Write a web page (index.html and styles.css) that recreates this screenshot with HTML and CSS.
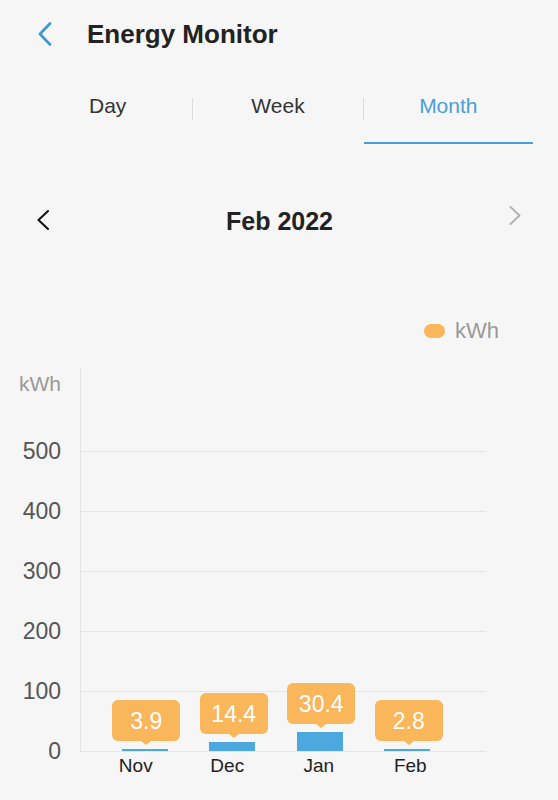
FILE: index.html
```html
<!DOCTYPE html>
<html lang="en">
<head>
  <meta charset="UTF-8" />
  <meta name="viewport" content="width=device-width, initial-scale=1" />
  <title>Energy Monitor</title>
  <link rel="stylesheet" href="styles.css">
</head>
<body>

  <header class="topbar">
    <a class="back" href="#" aria-label="Back">
      <svg width="14" height="24" viewBox="0 0 14 24"><polyline points="12,1.5 2,12 12,22.5" /></svg>
    </a>
    <h1>Energy Monitor</h1>
  </header>

  <nav class="tabs" aria-label="Period">
    <a class="tab" href="#">Day</a>
    <span class="tab-sep"></span>
    <a class="tab" href="#">Week</a>
    <span class="tab-sep"></span>
    <a class="tab active" href="#">Month</a>
  </nav>

  <section class="period">
    <button class="arrow prev" aria-label="Previous month">
      <svg width="14" height="20" viewBox="0 0 14 20"><polyline points="12,1 2.5,10 12,19" /></svg>
    </button>
    <h2>Feb 2022</h2>
    <button class="arrow next" aria-label="Next month">
      <svg width="12" height="19" viewBox="0 0 12 19"><polyline points="1.5,1 10.5,9.5 1.5,18" /></svg>
    </button>
  </section>

  <div class="legend">
    <span class="legend-dot"></span>
    <span class="legend-label">kWh</span>
  </div>

  <section class="chart" aria-label="Monthly energy use">
    <div class="y-axis">
      <span class="y-unit">kWh</span>
      <span class="y-tick">500</span>
      <span class="y-tick">400</span>
      <span class="y-tick">300</span>
      <span class="y-tick">200</span>
      <span class="y-tick">100</span>
      <span class="y-tick">0</span>
    </div>

    <div class="plot">
      <div class="col">
        <div class="tip">3.9</div>
        <div class="bar" style="height: 2px;"></div>
      </div>
      <div class="col">
        <div class="tip">14.4</div>
        <div class="bar" style="height: 9px;"></div>
      </div>
      <div class="col">
        <div class="tip">30.4</div>
        <div class="bar" style="height: 19px;"></div>
      </div>
      <div class="col">
        <div class="tip">2.8</div>
        <div class="bar" style="height: 2px;"></div>
      </div>
    </div>

    <div class="x-axis">
      <span>Nov</span>
      <span>Dec</span>
      <span>Jan</span>
      <span>Feb</span>
    </div>
  </section>

</body>
</html>
```

FILE: styles.css
```css
/* Base */
* {
  box-sizing: border-box;
}
body {
  margin: 0;
  font-family: 'Liberation Sans', Arial, sans-serif;
  background-color: #f6f6f6;
  color: #222;
  min-height: 100vh;
}

/* Top bar */
.topbar {
  height: 68px;
  display: flex;
  align-items: center;
  padding-left: 38px;
}
.back {
  display: flex;
  margin-right: 35px;
}
.back svg polyline {
  fill: none;
  stroke: #3d97d3;
  stroke-width: 2.6;
  stroke-linecap: round;
  stroke-linejoin: round;
}
.topbar h1 {
  margin: 0;
  font-size: 26px;
  font-weight: 700;
  color: #222;
}

/* Tabs */
.tabs {
  display: flex;
  margin: 0 25px 0 23px;
  height: 76px;
}
.tab {
  flex: 1;
  text-align: center;
  text-decoration: none;
  font-size: 21px;
  line-height: 76px;
  color: #333;
  border-bottom: 2px solid transparent;
}
.tab.active {
  color: #4a9ed6;
  border-bottom-color: #4a9ed6;
}
.tab-sep {
  width: 1px;
  height: 22px;
  margin-top: 30px;
  background-color: #dcdcdc;
}

/* Month switcher */
.period {
  display: flex;
  align-items: center;
  justify-content: space-between;
  height: 50px;
  margin-top: 51px;
  padding: 0 37px 0 36px;
}
.period h2 {
  margin: 0;
  font-size: 25px;
  font-weight: 700;
  color: #222;
  padding-top: 3px;
}
.arrow {
  background: none;
  border: none;
  padding: 0;
  display: flex;
}
.arrow polyline {
  fill: none;
  stroke-width: 2;
  stroke-linecap: round;
  stroke-linejoin: round;
}
.prev polyline { stroke: #111; }
.next { margin-top: -9px; }
.next polyline { stroke: #b3b3b3; }

/* Legend */
.legend {
  display: flex;
  justify-content: flex-end;
  align-items: center;
  gap: 10px;
  height: 26px;
  margin-top: 73px;
  padding-right: 59px;
}
.legend-dot {
  width: 21px;
  height: 14px;
  border-radius: 7px;
  background-color: #f9b65b;
}
.legend-label {
  font-size: 22px;
  color: #999;
}

/* Chart */
.chart {
  display: grid;
  grid-template-columns: 80px 406px;
  grid-template-rows: 384px auto;
  margin-top: 24px;
}
.y-axis {
  grid-row: 1;
  height: 384px;
  display: flex;
  flex-direction: column;
  align-items: flex-end;
  padding-right: 19px;
}
.y-unit {
  flex-shrink: 0;
  height: 32px;
  line-height: 32px;
  font-size: 21px;
  color: #999;
  margin-bottom: 21px;
}
.y-tick {
  flex-shrink: 0;
  height: 60px;
  line-height: 60px;
  font-size: 23px;
  color: #555;
}
.plot {
  grid-row: 1;
  height: 384px;
  display: flex;
  align-items: flex-end;
  padding: 0 0 1px 20px;
  border-left: 1px solid #e4e4e4;
  background-image: repeating-linear-gradient(to top, #e6e6e6 0 1px, transparent 1px 60px);
  background-size: 100% 301px;
  background-position: bottom;
  background-repeat: no-repeat;
}
.col {
  width: 87.5px;
  display: flex;
  flex-direction: column;
  align-items: center;
}
.tip {
  position: relative;
  width: 68px;
  height: 41px;
  line-height: 42px;
  margin: 0 0 8px 3px;
  border-radius: 6px;
  background-color: #f9b65b;
  color: #fff;
  font-size: 23px;
  text-align: center;
}
.tip::after {
  content: "";
  position: absolute;
  left: 50%;
  bottom: -4px;
  margin-left: -5px;
  border-left: 5px solid transparent;
  border-right: 5px solid transparent;
  border-top: 4px solid #f9b65b;
}
.bar {
  width: 46px;
  background-color: #4ea8e0;
}
.x-axis {
  grid-column: 2;
  grid-row: 2;
  display: flex;
  padding-left: 10px;
}
.x-axis span {
  width: 91.5px;
  text-align: center;
  font-size: 19px;
  line-height: 28px;
  color: #222;
}
```
